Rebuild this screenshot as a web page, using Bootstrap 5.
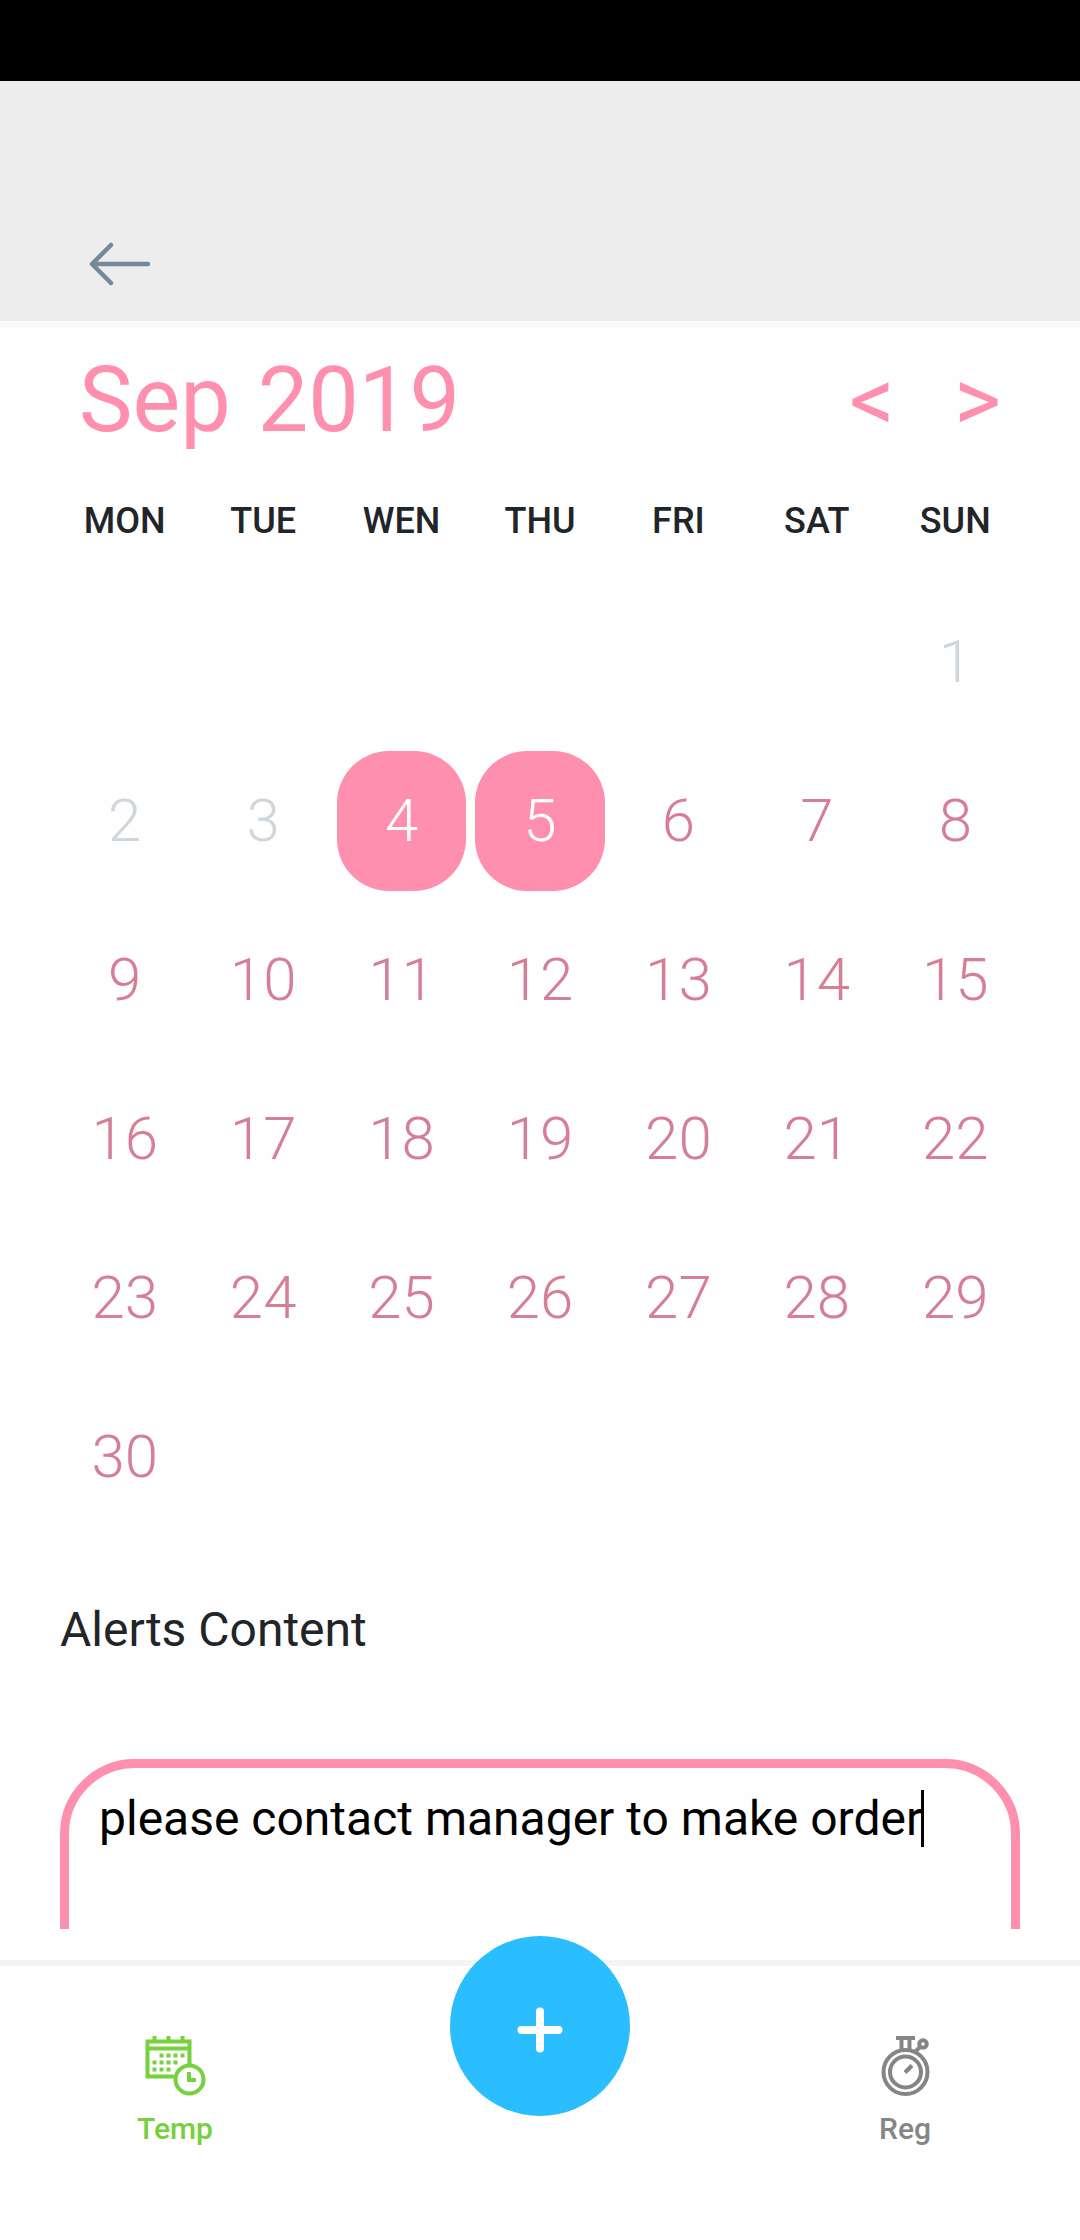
<!DOCTYPE html>
<html lang="en">
<head>
<meta charset="utf-8">
<meta name="viewport" content="width=device-width, initial-scale=1">
<title>Alerts calendar</title>
<link href="https://cdn.jsdelivr.net/npm/bootstrap@5.3.0/dist/css/bootstrap.min.css" rel="stylesheet">
<style>
:root { --pink: #ff8fae; --rose: #d57f97; --mist: #cfd6dc; --sky: #2bbeff; --leaf: #76d13c; }
body { font-family: Roboto, "Liberation Sans", sans-serif; color: #212529; background: #fefefe; }
.status-strip { height: 81px; background: #000; }
.top-bar { height: 246px; background: #ededed; border-bottom: 6px solid #fafafa; padding: 0 80px 27px; }
.back-btn { padding: 0 9px; line-height: 0; }
.scroll-area { min-height: 0; overflow: hidden; padding-top: 20px; }
.month-bar { padding: 0 79px; margin-bottom: 45px; color: var(--pink); font-size: 90px; line-height: 108px; }
.month-bar h1 { font-size: inherit; line-height: inherit; font-weight: 400; gap: 27px; }
.month-steps { gap: 59px; }
.month-steps .btn { font-size: inherit; line-height: inherit; color: inherit; border: 0; border-radius: 0; }
.calendar-wrap { padding: 0 56px 0 55px; margin-bottom: 56px; }
.cal-grid { table-layout: fixed; border-collapse: collapse; }
.cal-grid th { padding: 0 0 50px 1px; font-size: 36px; line-height: 42px; font-weight: 500; }
.cal-grid td { padding: 0 4px 19px 5px; height: 159px; }
.day { display: block; width: 100%; height: 140px; padding: 0; border: 0; border-radius: 52px; background: none; color: var(--rose); font-size: 60px; line-height: 70px; font-weight: 300; }
.day:disabled { color: var(--mist); }
.day.picked { background: var(--pink); color: #fff; }
.alert-form { padding: 0 60px; }
.alert-form label { font-size: 48px; line-height: 56px; margin-bottom: 101px; }
.alert-box { display: block; width: 100%; height: 300px; padding: 23px 30px; border: 9px solid var(--pink); border-radius: 75px; background: #fefefe; color: #000; font-size: 48px; line-height: 56px; resize: none; outline: 0; overflow: hidden; }
.text-caret { left: 861px; top: 31px; width: 3px; height: 57px; background: #000; }
.bottom-dock { padding-top: 31px; }
.dock-bar { height: 280px; border-top: 6px solid #f4f4f4; background: #fff; padding: 68px 130px 0; }
.dock-link { width: 90px; font-size: 30px; line-height: 36px; font-weight: 500; text-decoration: none; color: #858585; gap: 13px; }
.dock-link.current { color: var(--leaf); }
.add-btn { width: 180px; height: 180px; top: 7px; left: 50%; margin-left: -90px; padding: 8px 0 0; border: 0; background: var(--sky); }
</style>
<script src="https://cdn.jsdelivr.net/npm/bootstrap@5.3.0/dist/js/bootstrap.bundle.min.js" defer></script>
</head>
<body class="vh-100 d-flex flex-column overflow-hidden">
<div class="status-strip flex-shrink-0"></div>
<header class="top-bar flex-shrink-0 d-flex align-items-end">
  <button class="back-btn btn border-0" type="button" aria-label="Back">
    <svg width="62" height="60" viewBox="0 0 62 60" fill="none" stroke="#778899" stroke-width="4.500" stroke-linecap="round" stroke-linejoin="round"><path d="M59 30H3M22 11 3 30l19 19"/></svg>
  </button>
</header>

<main class="scroll-area flex-grow-1">
  <div class="month-bar d-flex justify-content-between">
    <h1 class="m-0 d-flex"><span>Sep</span> <span>2019</span></h1>
    <div class="month-steps d-flex">
      <button class="btn p-0" type="button" aria-label="Previous month">&lt;</button>
      <button class="btn p-0" type="button" aria-label="Next month">&gt;</button>
    </div>
  </div>

  <div class="calendar-wrap">
    <table class="cal-grid w-100 text-center">
      <thead><tr><th scope="col">MON</th><th scope="col">TUE</th><th scope="col">WEN</th><th scope="col">THU</th><th scope="col">FRI</th><th scope="col">SAT</th><th scope="col">SUN</th></tr></thead>
      <tbody>
        <tr><td></td><td></td><td></td><td></td><td></td><td></td><td><button class="day" type="button" disabled>1</button></td></tr>
        <tr><td><button class="day" type="button" disabled>2</button></td><td><button class="day" type="button" disabled>3</button></td><td><button class="day picked" type="button" aria-pressed="true">4</button></td><td><button class="day picked" type="button" aria-pressed="true">5</button></td><td><button class="day" type="button">6</button></td><td><button class="day" type="button">7</button></td><td><button class="day" type="button">8</button></td></tr>
        <tr><td><button class="day" type="button">9</button></td><td><button class="day" type="button">10</button></td><td><button class="day" type="button">11</button></td><td><button class="day" type="button">12</button></td><td><button class="day" type="button">13</button></td><td><button class="day" type="button">14</button></td><td><button class="day" type="button">15</button></td></tr>
        <tr><td><button class="day" type="button">16</button></td><td><button class="day" type="button">17</button></td><td><button class="day" type="button">18</button></td><td><button class="day" type="button">19</button></td><td><button class="day" type="button">20</button></td><td><button class="day" type="button">21</button></td><td><button class="day" type="button">22</button></td></tr>
        <tr><td><button class="day" type="button">23</button></td><td><button class="day" type="button">24</button></td><td><button class="day" type="button">25</button></td><td><button class="day" type="button">26</button></td><td><button class="day" type="button">27</button></td><td><button class="day" type="button">28</button></td><td><button class="day" type="button">29</button></td></tr>
        <tr><td><button class="day" type="button">30</button></td><td></td><td></td><td></td><td></td><td></td><td></td></tr>
      </tbody>
    </table>
  </div>

  <form class="alert-form">
    <label class="d-block" for="alertText">Alerts Content</label>
    <div class="position-relative">
      <textarea class="alert-box" id="alertText">please contact manager to make order</textarea>
      <span class="text-caret position-absolute"></span>
    </div>
  </form>
</main>

<footer class="bottom-dock flex-shrink-0 position-relative">
  <nav class="dock-bar d-flex justify-content-between align-items-start">
    <a class="dock-link current d-flex flex-column align-items-center" href="#temp" aria-current="page">
      <svg width="64" height="64" viewBox="0 0 64 64" fill="none" stroke="currentColor" stroke-width="4">
        <path d="M31 42.500H4.500V7.500H46.500V30M4.500 14.500H46.500"/>
        <path d="M11.500 2v6M25.500 2v6M39.500 2v6"/>
        <path stroke-dasharray="4 3" d="M16.500 21.500h25M9.500 28.500h25M9.500 35.500h18"/>
        <circle cx="46.500" cy="45.500" r="14"/>
        <path d="M46 38v8h7"/>
      </svg>
      <span>Temp</span>
    </a>
    <a class="dock-link d-flex flex-column align-items-center" href="#reg">
      <svg width="64" height="64" viewBox="0 0 64 64" fill="none" stroke="currentColor" stroke-width="4">
        <circle cx="32.500" cy="38" r="22"/>
        <circle cx="32.500" cy="38" r="15.500"/>
        <path d="M23 4h19M28.500 4v12M36.500 4v12"/>
        <circle cx="50" cy="10" r="3.800"/>
        <path d="M47 13l-5 5M32 38.500l7-7"/>
      </svg>
      <span>Reg</span>
    </a>
  </nav>
  <button class="add-btn btn rounded-circle position-absolute d-flex align-items-center justify-content-center" type="button" aria-label="Add">
    <svg width="46" height="46" viewBox="0 0 46 46" stroke="#fff" stroke-width="8" stroke-linecap="round"><path d="M23 4.500v37M4.500 23h37"/></svg>
  </button>
</footer>
</body>
</html>
